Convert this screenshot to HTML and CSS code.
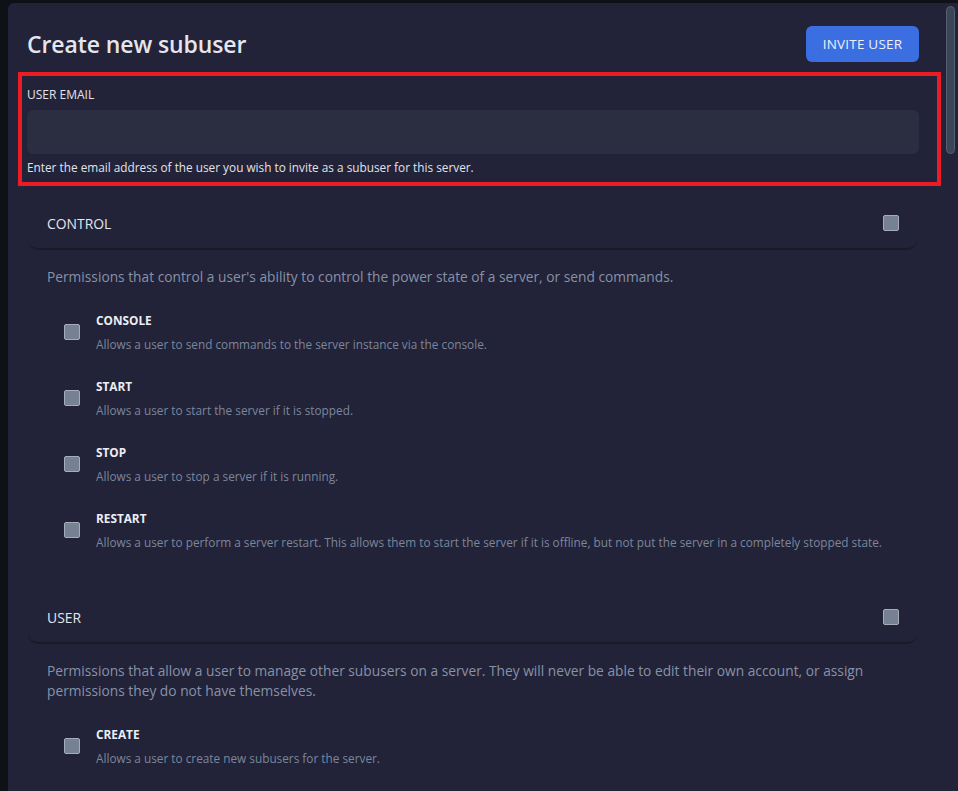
FILE: index.html
```html
<!DOCTYPE html>
<html lang="en">
<head>
<meta charset="utf-8">
<title>Create new subuser</title>
<link rel="stylesheet" href="styles.css">
</head>
<body>
<div class="modal">
  <div class="scrollbar"><div class="thumb"></div></div>
  <div class="top">
    <h2 class="title">Create new subuser</h2>
    <button class="invite">INVITE USER</button>
  </div>

  <div class="field">
    <div class="highlight"></div>
    <label class="field-label">USER EMAIL</label>
    <div class="input"></div>
    <p class="field-help">Enter the email address of the user you wish to invite as a subuser for this server.</p>
  </div>

  <section class="group">
    <div class="group-head">
      <span class="group-name">CONTROL</span>
      <span class="box"></span>
    </div>
    <p class="group-desc">Permissions that control a user's ability to control the power state of a server, or send commands.</p>
    <div class="perms">
      <div class="perm">
        <span class="box"></span>
        <div class="perm-text">
          <div class="perm-name">CONSOLE</div>
          <div class="perm-desc">Allows a user to send commands to the server instance via the console.</div>
        </div>
      </div>
      <div class="perm">
        <span class="box"></span>
        <div class="perm-text">
          <div class="perm-name">START</div>
          <div class="perm-desc">Allows a user to start the server if it is stopped.</div>
        </div>
      </div>
      <div class="perm">
        <span class="box"></span>
        <div class="perm-text">
          <div class="perm-name">STOP</div>
          <div class="perm-desc">Allows a user to stop a server if it is running.</div>
        </div>
      </div>
      <div class="perm">
        <span class="box"></span>
        <div class="perm-text">
          <div class="perm-name">RESTART</div>
          <div class="perm-desc">Allows a user to perform a server restart. This allows them to start the server if it is offline, but not put the server in a completely stopped state.</div>
        </div>
      </div>
    </div>
  </section>

  <section class="group">
    <div class="group-head">
      <span class="group-name">USER</span>
      <span class="box"></span>
    </div>
    <p class="group-desc">Permissions that allow a user to manage other subusers on a server. They will never be able to edit their own account, or assign permissions they do not have themselves.</p>
    <div class="perms">
      <div class="perm">
        <span class="box"></span>
        <div class="perm-text">
          <div class="perm-name">CREATE</div>
          <div class="perm-desc">Allows a user to create new subusers for the server.</div>
        </div>
      </div>
    </div>
  </section>
</div>
</body>
</html>
```

FILE: styles.css
```css
html, body {
  margin: 0;
  padding: 0;
  height: 100%;
  overflow: hidden;
}
body {
  background: #101017;
  font-family: "Open Sans", "Noto Sans", sans-serif;
  color: #e6e8ee;
}
.modal {
  position: relative;
  margin: 3px 0 0 8px;
  min-height: 900px;
  background: #222238;
  border-top-left-radius: 6px;
  padding: 23px 39px 0 19px;
  box-sizing: border-box;
}
.scrollbar {
  position: absolute;
  top: 3px;
  right: 3px;
  width: 9px;
  height: 782px;
}
.thumb {
  height: 148px;
  background: #3b4558;
  border: 1px solid #56606f;
  border-radius: 5px;
  box-sizing: border-box;
}
.top {
  display: flex;
  justify-content: space-between;
  align-items: center;
  height: 36px;
}
.title {
  margin: 0;
  font-family: "Open Sans", sans-serif;
  font-weight: 600;
  font-size: 23px;
  color: #e4e6ee;
  letter-spacing: -0.1px;
}
.invite {
  width: 113px;
  height: 36px;
  border: none;
  border-radius: 6px;
  background: #3b6ee0;
  color: #eef1fb;
  font-family: "Open Sans", sans-serif;
  font-size: 13.5px;
  letter-spacing: 0.2px;
  padding: 0;
}
.field {
  position: relative;
  margin-top: 25px;
}
.highlight {
  position: absolute;
  left: -9px;
  right: -22px;
  top: -15px;
  bottom: -11px;
  border: 4px solid #ec1c24;
  box-sizing: border-box;
  pointer-events: none;
}
.field-label {
  display: block;
  font-size: 12px;
  line-height: 16px;
  color: #e2e4ea;
}
.input {
  margin-top: 7px;
  height: 44px;
  background: #2b2e41;
  border-radius: 6px;
}
.field-help {
  margin: 5px 0 0;
  font-size: 11.8px;
  line-height: 16px;
  color: #e2e4ea;
}
.group {
  margin-top: 23px;
}
.group + .group {
  margin-top: 40px;
}
.group-head {
  display: flex;
  justify-content: space-between;
  align-items: center;
  height: 52px;
  padding: 0 18px 0 19px;
  border-bottom: 2px solid #1a1a29;
  border-radius: 0 0 10px 10px;
  box-sizing: border-box;
  margin: 0 2px 0 1px;
}
.group-name {
  font-size: 13.9px;
  color: #e4e6ee;
  padding-top: 1px;
}
.box {
  display: block;
  flex: none;
  width: 16px;
  height: 16px;
  background: #768193;
  border: 1px solid #a6adb8;
  border-radius: 2px;
  box-sizing: border-box;
}
.group-desc {
  margin: 17px 0 0;
  padding: 0 20px;
  font-size: 13.75px;
  line-height: 20px;
  color: #8792a8;
}
.perms {
  display: flex;
  flex-direction: column;
  gap: 22px;
  margin-top: 23px;
  padding-left: 37px;
}
.perm {
  display: flex;
  align-items: center;
  gap: 16px;
}
.perm-text {
  display: flex;
  flex-direction: column;
  gap: 4px;
}
.perm-name {
  font-size: 11.8px;
  font-weight: 700;
  line-height: 20px;
  color: #eceef3;
}
.perm-desc {
  font-size: 11.8px;
  line-height: 20px;
  color: #7b879c;
}
```
